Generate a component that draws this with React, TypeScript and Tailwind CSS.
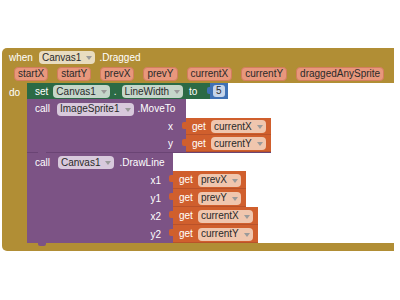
import React from "react";

const GOLD = "bg-[#b18e35]";
const PURPLE = "bg-[#7c5385]";

function Drop({ label, tone }: { label: string; tone: string }) {
  return (
    <span
      className={`inline-flex h-[13px] items-center rounded-[4px] px-[3px] leading-none text-[#2a2a2a] ${tone}`}
    >
      {label}
      <span className="ml-[5px] mt-[1px] h-0 w-0 border-x-[3px] border-t-[4px] border-x-transparent border-t-[#9a9a9a]" />
    </span>
  );
}

function Param({ name }: { name: string }) {
  return (
    <span className="inline-flex h-[14px] items-center rounded-[4px] border border-[#d27d5e] bg-[#e8977c] px-[3px] leading-none text-[#2a2a2a]">
      {name}
    </span>
  );
}

function Get({ name, h }: { name: string; h: string }) {
  return (
    <div
      className={`relative flex ${h} items-center border-b border-[#b9522a] bg-[#d05f2d] pl-[6px] pr-[5px] text-white`}
    >
      <span className="absolute left-[-4px] top-[4px] h-[7px] w-[4px] rounded-l-[2px] bg-[#d05f2d]" />
      <span>get</span>
      <span className="ml-[5px]">
        <Drop label={name} tone="bg-[#f0c6ae]" />
      </span>
    </div>
  );
}

function Tab() {
  return (
    <span className="absolute bottom-[-3px] left-[11px] h-[3px] w-[8px] rounded-b-[2px] bg-[#7c5385]" />
  );
}

export default function App() {
  const params = [
    "startX",
    "startY",
    "prevX",
    "prevY",
    "currentX",
    "currentY",
    "draggedAnySprite",
  ];

  return (
    <div className="h-[300px] w-[400px] bg-white pl-[2px] pt-[48px] font-['Liberation_Sans',Arial,sans-serif] text-[10px]">
      <div className="w-[392px]">
        {/* event header */}
        <div className={`rounded-tl-[5px] ${GOLD} text-white`}>
          <div className="flex h-[17px] items-center pl-[7px] pt-[1px]">
            <span>when</span>
            <span className="ml-[6px]">
              <Drop label="Canvas1" tone="bg-[#e8dcc0]" />
            </span>
            <span className="ml-[4px]">.Dragged</span>
          </div>
          <div className="flex h-[18px] items-center gap-[9px] pl-[12px]">
            {params.map((p) => (
              <Param key={p} name={p} />
            ))}
          </div>
        </div>

        <div className="flex">
          <div className={`w-[25px] ${GOLD} pl-[7px] pt-[2px] text-white`}>do</div>
          <div className="flex flex-col">
            {/* set Canvas1.LineWidth to 5 */}
            <div className="flex h-[16px]">
              <div className="relative flex w-[183px] items-center bg-[#2b6a45] pl-[8px] text-white">
                <span>set</span>
                <span className="ml-[5px]">
                  <Drop label="Canvas1" tone="bg-[#c5d6ca]" />
                </span>
                <span className="ml-[4px]">.</span>
                <span className="ml-[5px]">
                  <Drop label="LineWidth" tone="bg-[#c5d6ca]" />
                </span>
                <span className="ml-[6px]">to</span>
              </div>
              <div className="relative flex w-[18px] items-center bg-[#3f71b5] pl-[3px]">
                <span className="absolute left-[-3px] top-[4px] h-[7px] w-[3px] rounded-l-[2px] bg-[#3f71b5]" />
                <span className="inline-flex h-[12px] items-center rounded-[3px] bg-[#c5d4ea] px-[3px] leading-none text-[#2a2a2a]">
                  5
                </span>
              </div>
            </div>

            {/* call ImageSprite1.MoveTo */}
            <div className="relative flex flex-col border-b border-[#6a4474]">
              <div className={`flex h-[19px] w-[159px] items-center ${PURPLE} pl-[8px] text-white`}>
                <span>call</span>
                <span className="ml-[7px]">
                  <Drop label="ImageSprite1" tone="bg-[#d8c9dc]" />
                </span>
                <span className="ml-[4px]">.MoveTo</span>
              </div>
              {["x", "y"].map((l) => (
                <div key={l} className="flex h-[17px]">
                  <div className={`flex w-[159px] items-center justify-end ${PURPLE} pr-[13px] text-white`}>
                    {l}
                  </div>
                  <Get name={l === "x" ? "currentX" : "currentY"} h="h-[17px]" />
                </div>
              ))}
              <Tab />
            </div>

            {/* call Canvas1.DrawLine */}
            <div className="relative flex flex-col">
              <div className={`flex h-[18px] w-[146px] items-center ${PURPLE} pl-[8px] text-white`}>
                <span>call</span>
                <span className="ml-[8px]">
                  <Drop label="Canvas1" tone="bg-[#d8c9dc]" />
                </span>
                <span className="ml-[5px]">.DrawLine</span>
              </div>
              {[
                ["x1", "prevX"],
                ["y1", "prevY"],
                ["x2", "currentX"],
                ["y2", "currentY"],
              ].map(([l, v]) => (
                <div key={l} className="flex h-[18px]">
                  <div className={`flex w-[146px] items-center justify-end ${PURPLE} pr-[12px] text-white`}>
                    {l}
                  </div>
                  <Get name={v} h="h-[18px]" />
                </div>
              ))}
              <Tab />
            </div>
          </div>
        </div>

        <div className={`h-[8px] rounded-bl-[5px] ${GOLD}`} />
      </div>
    </div>
  );
}
